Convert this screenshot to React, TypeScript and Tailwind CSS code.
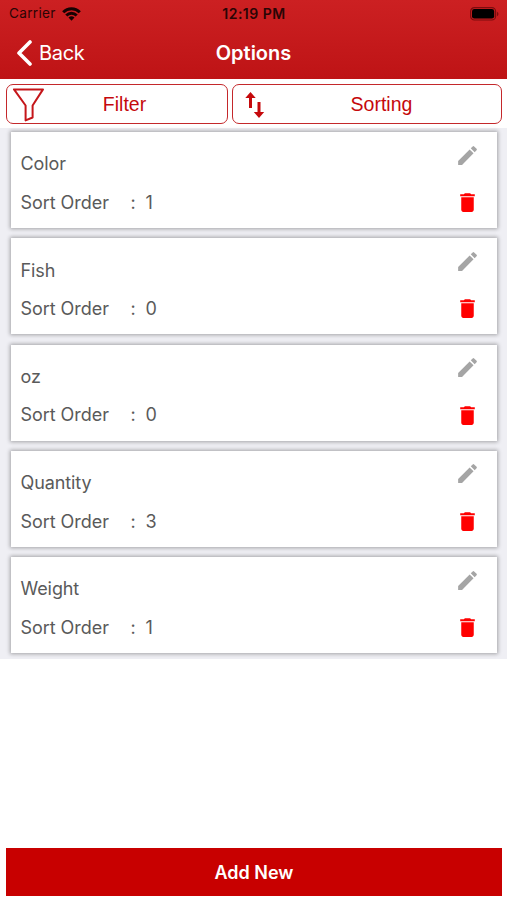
const options = [
  { name: 'Color', order: 1 },
  { name: 'Fish', order: 0 },
  { name: 'oz', order: 0 },
  { name: 'Quantity', order: 3 },
  { name: 'Weight', order: 1 },
];

function StatusBar() {
  return (
    <div className="grid h-[27px] grid-cols-3 items-center pl-[9px] pr-[8px] text-[#2a0505]">
      <div className="flex items-center gap-[6px]">
        <span className="pt-px text-[13.6px] leading-none tracking-[0.3px]">Carrier</span>
        <svg width="19" height="14" viewBox="0 0 19 14" fill="none" stroke="#160202" strokeWidth="3">
          <path d="M1.2 5.2a11.8 11.8 0 0 1 16.6 0" />
          <path d="M4.3 8.5a7.4 7.4 0 0 1 10.4 0" />
          <path d="M9.5 13.7 6.5 10.6a4.3 4.3 0 0 1 6 0Z" fill="#160202" stroke="none" />
        </svg>
      </div>
      <span className="pt-px text-center text-[14px] font-semibold leading-none tracking-[0.5px]">12:19 PM</span>
      <svg className="justify-self-end" width="29" height="14" viewBox="0 0 29 14">
        <rect x="0.6" y="0.6" width="25" height="12.4" rx="3.8" fill="none" stroke="#7c0c0e" strokeWidth="1.2" />
        <rect x="2" y="2" width="22.2" height="9.6" rx="2.4" fill="#000" />
        <path d="M27 4.8c2 .8 2 3.6 0 4.4Z" fill="#7c0c0e" />
      </svg>
    </div>
  );
}

function OptionCard({ name, order }: { name: string; order: number }) {
  return (
    <div className="h-[106.25px] pl-[11px] pr-[10px] pt-[4px]">
      <div className="flex h-[96px] justify-between bg-white pl-[9.5px] pr-[17px] shadow-[0_0_4px_1px_rgba(0,0,0,0.32)]">
        <div className="flex flex-col pt-[20.3px] text-[18px] leading-[24px] text-[#5a5a5a]">
          <span className="tracking-[-0.1px]">{name}</span>
          <div className="mt-[14.7px] flex">
            <span className="w-[110px] tracking-[-0.05px]">Sort Order</span>
            <span className="w-[15px]">:</span>
            <span>{order}</span>
          </div>
        </div>
        <div className="flex flex-col items-center pt-[10.5px]">
          <svg width="25" height="25" viewBox="0 0 24 24" fill="#a5a5a5">
            <path d="M3 17.25V21h3.75L17.81 9.94l-3.75-3.75L3 17.25zM20.71 7.04a1 1 0 0 0 0-1.41l-2.34-2.34a1 1 0 0 0-1.41 0l-1.83 1.83 3.75 3.75 1.83-1.83z" />
          </svg>
          <svg className="mt-[22.5px]" width="25" height="25" viewBox="0 0 24 24" fill="#ff0000">
            <path d="M6 19c0 1.1.9 2 2 2h8c1.1 0 2-.9 2-2V7H6v12zM19 4h-3.5l-1-1h-5l-1 1H5v2h14V4z" />
          </svg>
        </div>
      </div>
    </div>
  );
}

export default function App() {
  return (
    <div className="flex h-[900px] w-[507px] flex-col overflow-hidden bg-white font-['Inter',sans-serif]">
      <header className="h-[79px] shrink-0 bg-linear-to-b from-[#cc2022] to-[#be1315]">
        <StatusBar />
        <div className="grid h-[51px] grid-cols-3 items-center px-[16px] text-white">
          <button className="flex items-center gap-[7px]">
            <svg width="16" height="26" viewBox="0 0 16 26" fill="none" stroke="currentColor" strokeWidth="3.6" strokeLinecap="round" strokeLinejoin="round">
              <path d="M14 2 3 13l11 11" />
            </svg>
            <span className="text-[20px] leading-none tracking-[-0.3px]">Back</span>
          </button>
          <h1 className="text-center text-[20px] font-semibold leading-none">Options</h1>
        </div>
      </header>

      <div className="flex h-[49px] shrink-0 gap-[4px] pb-[4px] pl-[6px] pr-[5px] pt-[5px] font-['Liberation_Sans',sans-serif] text-[19.5px] text-[#c5090c]">
        <button className="flex w-[222px] items-center rounded-[7px] border border-[#c4282b] pl-[6px] pt-[2px]">
          <svg width="32" height="34" viewBox="0 0 32 34" fill="none" stroke="#c5161a" strokeWidth="2" strokeLinejoin="round">
            <path d="M1 1.4h29L19.6 17.5V29.5L12.6 32.4V17.5Z" />
          </svg>
          <span className="flex-1 pr-[23px] text-center">Filter</span>
        </button>
        <button className="flex flex-1 items-center rounded-[7px] border border-[#c4282b] pl-[12px] pt-[2px]">
          <svg width="20" height="28" viewBox="0 0 20 28" fill="none" stroke="#c5090c" strokeWidth="3">
            <path d="M5.5 17V4M14 11v13" />
            <path d="M.3 7 5.5 1l5.200 6ZM8.800 21l5.200 6 5.200-6Z" fill="#c5090c" stroke="none" />
          </svg>
          <span className="flex-1 pr-[3px] text-center">Sorting</span>
        </button>
      </div>

      <main className="h-[531.25px] shrink-0 bg-[#efeff4]">
        {options.map((option) => (
          <OptionCard key={option.name} name={option.name} order={option.order} />
        ))}
      </main>

      <button className="mb-[4px] ml-[6px] mr-[5px] mt-auto h-[48px] shrink-0 bg-[#c80000] text-[18px] font-semibold text-white">
        Add New
      </button>
    </div>
  );
}
